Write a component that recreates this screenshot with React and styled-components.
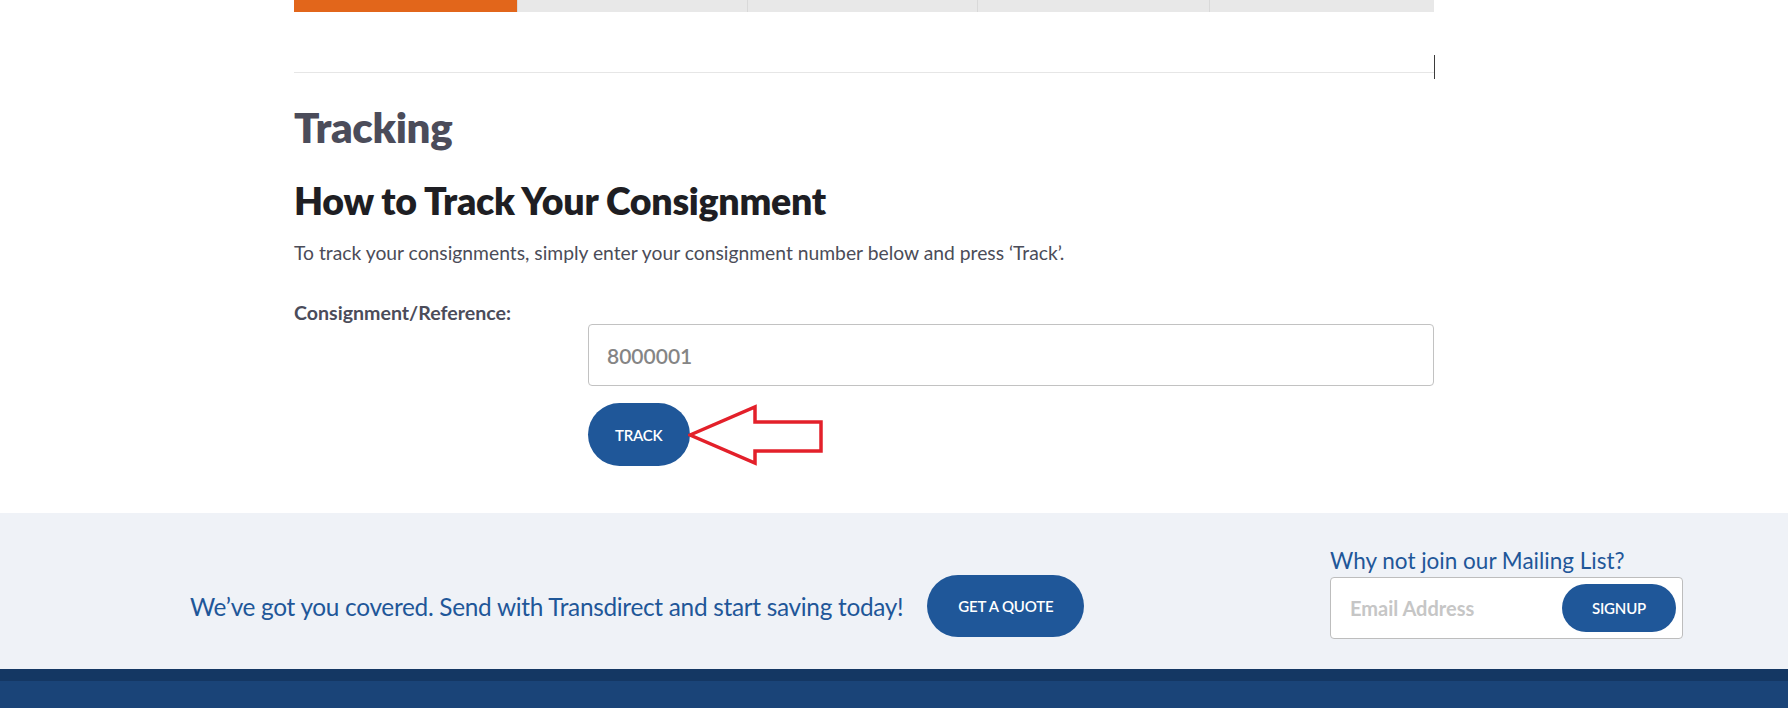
import React from "react";
import styled, { createGlobalStyle } from "styled-components";

const GlobalStyle = createGlobalStyle`
  html, body {
    margin: 0;
    padding: 0;
    background: #ffffff;
    font-family: Lato, "Open Sans", Arial, sans-serif;
  }
  * { box-sizing: border-box; }
`;

const Page = styled.div`
  width: 1788px;
  min-height: 708px;
  display: flex;
  flex-direction: column;
`;

const Main = styled.main`
  width: 1140px;
  margin-left: 294px;
  padding-bottom: 47px;
`;

const Tabs = styled.div`
  display: grid;
  grid-template-columns: 223px 230px 230px 232px 1fr;
  height: 12px;
`;

const Tab = styled.div`
  background: ${({ active }) => (active ? "#e2661b" : "#e8e8e8")};
  border-left: ${({ active }) => (active ? "none" : "1px solid #d9d9d9")};
`;

const Divider = styled.div`
  position: relative;
  margin-top: 60px;
  height: 1px;
  background: #e6e6e6;

  &::after {
    content: "";
    position: absolute;
    right: -1px;
    top: -17px;
    width: 1px;
    height: 24px;
    background: #3b3b3b;
  }
`;

const Title = styled.h1`
  margin: 28px 0 0;
  font-size: 42px;
  line-height: 52px;
  font-weight: 800;
  color: #4b4c5a;
  letter-spacing: -0.3px;
`;

const Subtitle = styled.h2`
  margin: 25px 0 0;
  font-size: 37.5px;
  line-height: 46px;
  font-weight: 800;
  color: #1e1e23;
  letter-spacing: -0.3px;
`;

const Intro = styled.p`
  margin: 15px 0 0;
  font-size: 19.3px;
  line-height: 28px;
  color: #4b4c58;
`;

const FormRow = styled.div`
  display: grid;
  grid-template-columns: 294px 1fr;
  margin-top: 33px;
`;

const Label = styled.label`
  font-size: 19.6px;
  line-height: 26px;
  font-weight: 700;
  color: #4b4c5a;
`;

const Field = styled.div`
  display: flex;
  flex-direction: column;
  gap: 17px;
  padding-top: 24px;
`;

const Input = styled.input`
  width: 100%;
  height: 62px;
  padding: 0 18px;
  border: 1px solid #c2c2c2;
  border-radius: 4px;
  font-family: inherit;
  font-size: 21px;
  font-weight: 600;
  color: #858585;
  outline: none;
`;

const ButtonRow = styled.div`
  display: flex;
  align-items: center;
`;

const PillButton = styled.button`
  height: ${({ h }) => h || 62}px;
  padding: 0 ${({ px }) => px || 28}px;
  border: none;
  border-radius: 40px;
  background: #1f5799;
  color: #ffffff;
  font-family: inherit;
  font-size: ${({ fs }) => fs || 15}px;
  font-weight: 600;
  text-transform: uppercase;
  letter-spacing: -0.2px;
  cursor: pointer;
  flex-shrink: 0;
`;

const Arrow = styled.svg`
  margin-left: -2px;
  display: block;
`;

const Promo = styled.section`
  background: #eff2f7;
  height: 156px;
  display: flex;
  align-items: flex-end;
  justify-content: space-between;
  padding: 0 105px 30px 190px;
`;

const PromoLeft = styled.div`
  display: flex;
  align-items: center;
  gap: 24px;
  padding-bottom: 2px;
`;

const PromoText = styled.p`
  margin: 0;
  font-size: 24.4px;
  color: #1f5799;
  letter-spacing: -0.3px;
`;

const Mailing = styled.div`
  display: flex;
  flex-direction: column;
  gap: 3px;
`;

const MailingTitle = styled.div`
  font-size: 22.5px;
  line-height: 26px;
  color: #1f5799;
`;

const MailingBox = styled.div`
  width: 353px;
  height: 62px;
  display: flex;
  align-items: center;
  justify-content: space-between;
  padding: 0 6px 0 17px;
  background: #ffffff;
  border: 1px solid #bdbdbd;
  border-radius: 4px;
`;

const EmailInput = styled.input`
  border: none;
  outline: none;
  width: 200px;
  font-family: inherit;
  font-size: 20px;
  font-weight: 700;
  color: #444;
  background: transparent;

  &::placeholder {
    color: #c6c6c6;
  }
`;

const FooterBand = styled.footer`
  flex: 1;
  min-height: 39px;
  background: #1a4478;
  border-top: 12px solid #143763;
`;

const tabs = [true, false, false, false, false];

export default function App() {
  return (
    <>
      <GlobalStyle />
      <Page>
        <Main>
          <Tabs>
            {tabs.map((active, i) => (
              <Tab key={i} active={active} />
            ))}
          </Tabs>
          <Divider />
          <Title>Tracking</Title>
          <Subtitle>How to Track Your Consignment</Subtitle>
          <Intro>
            To track your consignments, simply enter your consignment number below and press ‘Track’.
          </Intro>
          <FormRow>
            <Label htmlFor="ref">Consignment/Reference:</Label>
            <Field>
              <Input id="ref" defaultValue="8000001" />
              <ButtonRow>
                <PillButton h={63} px={27}>Track</PillButton>
                <Arrow width="136" height="62" viewBox="0 0 136 62">
                  <polygon
                    points="2,31 67,3 67,18 133,18 133,47 67,47 67,59"
                    fill="#ffffff"
                    stroke="#e3202a"
                    strokeWidth="3.5"
                    strokeLinejoin="miter"
                  />
                </Arrow>
              </ButtonRow>
            </Field>
          </FormRow>
        </Main>
        <Promo>
          <PromoLeft>
            <PromoText>We’ve got you covered. Send with Transdirect and start saving today!</PromoText>
            <PillButton h={62} px={31}>Get a quote</PillButton>
          </PromoLeft>
          <Mailing>
            <MailingTitle>Why not join our Mailing List?</MailingTitle>
            <MailingBox>
              <EmailInput placeholder="Email Address" />
              <PillButton h={48} px={30}>Signup</PillButton>
            </MailingBox>
          </Mailing>
        </Promo>
        <FooterBand />
      </Page>
    </>
  );
}
